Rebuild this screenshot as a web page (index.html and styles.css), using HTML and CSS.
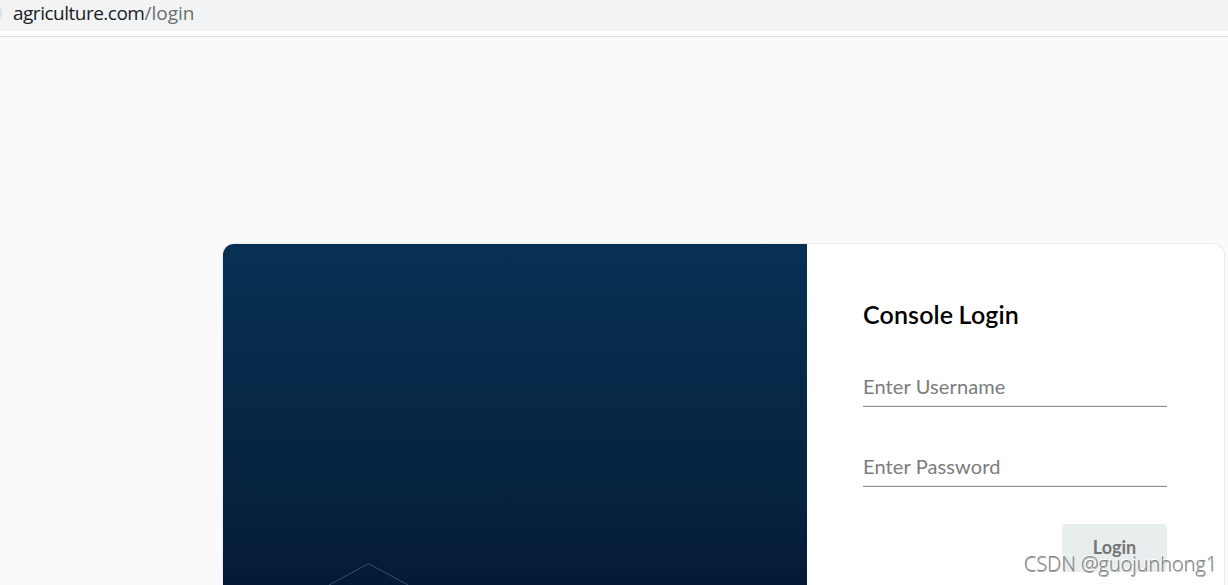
FILE: index.html
```html
<!DOCTYPE html>
<html lang="en">
<head>
<meta charset="utf-8">
<title>Console Login</title>
<link rel="stylesheet" href="styles.css">
</head>
<body>
<header class="browser-bar">
  <div class="address"><span class="address-icon"></span><span class="host">agriculture.com</span><span class="path">/login</span></div>
</header>
<main class="page">
  <section class="card">
    <div class="hero">
      <svg class="hexagon" width="180" height="22" viewBox="0 0 180 22" fill="none" stroke="#3b4f69"><path d="M51 22 90.500.6 130 22"/></svg>
    </div>
    <form class="login-form">
      <h1 class="title">Console Login</h1>
      <input class="field" type="text" placeholder="Enter Username" aria-label="Username">
      <input class="field" type="password" placeholder="Enter Password" aria-label="Password">
      <button class="submit" type="button">Login</button>
    </form>
  </section>
</main>
<div class="watermark">CSDN @guojunhong1</div>
</body>
</html>
```
FILE: styles.css
```css
* { box-sizing: border-box; }
body {
  margin: 0;
  height: 585px;
  overflow: hidden;
  background: #fafafa;
  font-family: Lato, sans-serif;
}
.browser-bar {
  height: 37px;
  background: #fff;
  border-bottom: 1px solid #dadce0;
}
.address {
  display: flex;
  align-items: center;
  height: 31px;
  padding-bottom: 5px;
  background: #f1f3f4;
  font: 19px/26px "Open Sans", sans-serif;
  letter-spacing: -0.5px;
}
.address-icon {
  width: 20px;
  height: 20px;
  margin: 0 11px 0 -18px;
  border-radius: 50%;
  background: #dcdee0;
}
.host { color: #202124; }
.path { color: #6b6e72; letter-spacing: 0; }
.page { padding: 206px 3px 0 222px; }
.card {
  display: flex;
  height: 342px;
  border: 1px solid #ebebeb;
  border-bottom: 0;
  border-radius: 12px 12px 0 0;
  overflow: hidden;
  background: #fff;
}
.hero {
  flex: 0 0 584px;
  padding: 319px 0 0 55px;
  background: linear-gradient(#073053 0, #06223e 265px, #051936 341px);
}
.hexagon { display: block; }
.login-form {
  display: flex;
  flex: 1;
  flex-direction: column;
  padding: 54px 57px 0 56px;
}
.title {
  margin: 0 0 39px;
  color: #000;
  font-size: 25px;
  line-height: 32px;
  font-weight: 600;
  letter-spacing: 0.15px;
  word-spacing: -1px;
}
.field {
  width: 100%;
  height: 38px;
  margin-bottom: 42px;
  padding: 0 0 3px;
  border: 0;
  border-bottom: 1px solid #919191;
  border-radius: 0;
  background: transparent;
  box-shadow: inset 0 -1px #e8e8e8;
  color: #222;
  font: 400 20px Lato, sans-serif;
  letter-spacing: 0.12px;
}
.field::placeholder { color: #7c7c7c; opacity: 1; }
.submit {
  align-self: flex-end;
  width: 105px;
  height: 48px;
  margin-top: -5px;
  padding: 0 0 2px;
  border: 0;
  border-radius: 4px;
  background: #e8eded;
  color: #757575;
  font: 700 18px Lato, sans-serif;
}
.watermark {
  position: absolute;
  right: 11px;
  bottom: 7px;
  color: #858585;
  font: 300 20px/28px "Open Sans", sans-serif;
  letter-spacing: -0.05px;
  text-shadow: -1px -1px 0 #fff, 0.5px 0.5px 0 #aaa;
}
```
